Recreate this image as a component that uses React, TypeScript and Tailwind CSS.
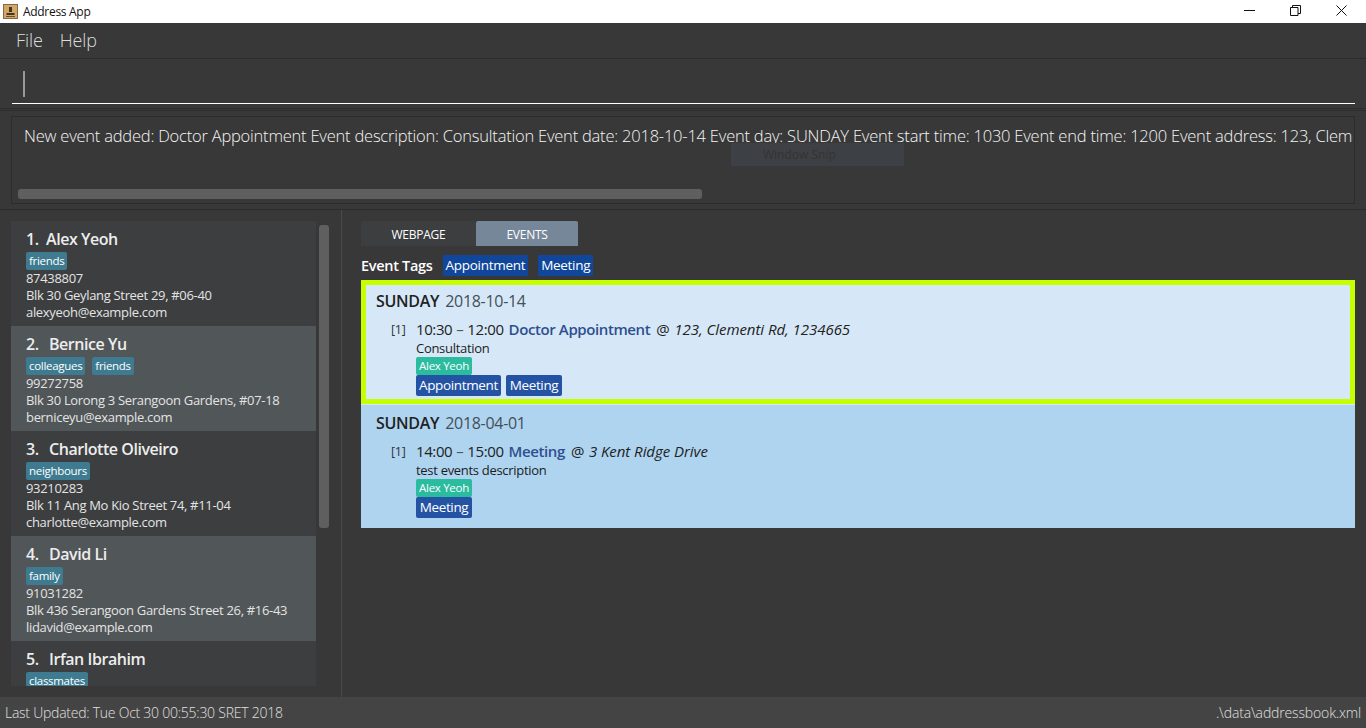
const font = { fontFamily: '"Open Sans", "Noto Sans", sans-serif' };

type Person = {
  id: number;
  name: string;
  tags: string[];
  phone?: string;
  address?: string;
  email?: string;
};

const people: Person[] = [
  { id: 1, name: "Alex Yeoh", tags: ["friends"], phone: "87438807", address: "Blk 30 Geylang Street 29, #06-40", email: "alexyeoh@example.com" },
  { id: 2, name: "Bernice Yu", tags: ["colleagues", "friends"], phone: "99272758", address: "Blk 30 Lorong 3 Serangoon Gardens, #07-18", email: "berniceyu@example.com" },
  { id: 3, name: "Charlotte Oliveiro", tags: ["neighbours"], phone: "93210283", address: "Blk 11 Ang Mo Kio Street 74, #11-04", email: "charlotte@example.com" },
  { id: 4, name: "David Li", tags: ["family"], phone: "91031282", address: "Blk 436 Serangoon Gardens Street 26, #16-43", email: "lidavid@example.com" },
  // the list is cut off here, only the tag row of this one shows
  { id: 5, name: "Irfan Ibrahim", tags: ["classmates"] },
];

const PersonCard = ({ person }: { person: Person }) => (
  <div className={`h-[105px] shrink-0 pl-[15px] pt-[7px] ${person.id % 2 === 0 ? "bg-[#515658]" : "bg-[#3c3e3f]"}`}>
    <div className="flex h-[22px] items-center text-[16px] leading-[22px] font-semibold tracking-[-0.45px] text-[#ededed]">
      <span className={person.id === 1 ? "w-[20px]" : "w-[23px]"}>{person.id}.</span>
      <span>{person.name}</span>
    </div>
    <div className="mt-[2px] flex h-[18px] gap-[7px]">
      {person.tags.map((t) => (
        <span key={t} className="h-[18px] rounded-[2px] bg-[#3e7b91] px-[3px] text-[11.5px] leading-[18px] tracking-[-0.3px] text-white">
          {t}
        </span>
      ))}
    </div>
    <div className="text-[13px] leading-[17px] tracking-[-0.32px] text-[#e4e4e4]">
      {person.phone && <div>{person.phone}</div>}
      {person.address && <div>{person.address}</div>}
      {person.email && <div>{person.email}</div>}
    </div>
  </div>
);

type Ev = {
  day: string;
  date: string;
  time: string;
  end: string;
  title: string;
  place: string;
  desc: string;
  tags: string[];
  selected?: boolean;
};

const events: Ev[] = [
  { day: "SUNDAY", date: "2018-10-14", time: "10:30", end: "12:00", title: "Doctor Appointment", place: "123, Clementi Rd, 1234665", desc: "Consultation", tags: ["Appointment", "Meeting"], selected: true },
  { day: "SUNDAY", date: "2018-04-01", time: "14:00", end: "15:00", title: "Meeting", place: "3 Kent Ridge Drive", desc: "test events description", tags: ["Meeting"] },
];

const EventCard = ({ ev }: { ev: Ev }) => (
  <div className={ev.selected ? "h-[124px] border-[5px] border-[#c6ff00] bg-[#d6e8f7] pl-[10px] pt-[4px]" : "h-[124px] border-t border-[#d6e8f7] bg-[#aed4f0] pl-[15px] pt-[6px]"}>
    <div className="flex h-[24px] items-center gap-[6px] text-[16px] tracking-[-0.3px]">
      <span className="font-semibold text-[#222]">{ev.day}</span>
      <span className="text-[#444f59]">{ev.date}</span>
    </div>
    <div className="mt-[5px] flex">
      <span className="ml-[15px] w-[25px] text-[12.5px] leading-[23px] tracking-[-0.3px] text-[#333]">[1]</span>
      <div>
        <div className="flex h-[22px] items-center text-[15px] tracking-[-0.4px] text-[#222]">
          <span>{ev.time}</span>
          <span className="mx-[4px] text-[#555]">–</span>
          <span>{ev.end}</span>
          <span className="ml-[5px] font-semibold text-[#2f4f8f]">{ev.title}</span>
          <span className="ml-[6px]">@</span>
          <span className="ml-[5px] italic tracking-[-0.05px]">{ev.place}</span>
        </div>
        <div className="h-[17px] text-[13px] leading-[16px] tracking-[-0.3px] text-[#1c1c1c]">{ev.desc}</div>
        <div className="h-[18px] w-[56px] rounded-[2px] bg-[#2bbb9f] text-center text-[11.5px] leading-[18px] tracking-[-0.3px] text-white">
          Alex Yeoh
        </div>
        <div className="flex gap-[5px]">
          {ev.tags.map((t) => (
            <span key={t} className="h-[21px] min-w-[56px] rounded-[2px] bg-[#2553a4] px-[3px] text-center text-[13.5px] leading-[21px] tracking-[-0.35px] text-white">
              {t}
            </span>
          ))}
        </div>
      </div>
    </div>
  </div>
);

export default function App() {
  return (
    <div style={font} className="relative flex h-[728px] w-[1366px] flex-col overflow-hidden bg-[#383838]">
      {/* window title */}
      <div className="flex h-[23px] shrink-0 items-center bg-white pl-[3px]">
        <svg width="15" height="15" viewBox="0 0 15 15">
          <rect width="15" height="15" fill="#8a6a3a" />
          <rect x="1" y="1" width="13" height="13" fill="#d0a868" />
          <path d="M6 3h3v5h-3z M3.5 9h8v2h-8z" fill="#4a3420" />
          <rect x="3" y="12" width="9" height="1" fill="#6b4e2c" />
        </svg>
        <span className="ml-[5px] text-[12px] tracking-[-0.3px] text-[#111]">Address App</span>
        <div className="ml-auto mb-[2px] flex items-center">
          <svg width="11" height="11" viewBox="0 0 11 11" className="mr-[35px]"><path d="M0 5.5h11" stroke="#111" /></svg>
          <svg width="11" height="11" viewBox="0 0 11 11" className="mr-[35px]"><path d="M.5 2.5h7.5v8h-7.5z M2.5 2.5v-2h8v8h-2.5" fill="none" stroke="#111" /></svg>
          <svg width="11" height="11" viewBox="0 0 11 11" className="mr-[19px]"><path d="M.5.5l10 10 M10.5.5l-10 10" stroke="#111" /></svg>
        </div>
      </div>

      {/* menu */}
      <div className="flex h-[35px] shrink-0 items-center gap-[17px] pl-[16px] text-[18px] font-light tracking-[-0.1px] text-[#dcdcdc]">
        <span>File</span>
        <span>Help</span>
      </div>

      {/* command box */}
      <div className="h-[51px] shrink-0 border-t border-b border-[#2c2c2c] pl-[12px] pr-[11px] pt-[11px]">
        <div className="h-[34px] border-b border-white pl-[11px] pt-[1px]">
          <div className="h-[26px] w-[2px] bg-[#9a9a9a]" />
        </div>
      </div>

      {/* result display */}
      <div className="mt-[1px] h-[100px] shrink-0 border-t border-b border-[#2c2c2c] px-[11px] py-[5px]">
        <div className="h-[88px] border border-[#2c2c2c] pl-[12px] pr-[1px] pt-[8px]">
          <div className="overflow-hidden whitespace-nowrap text-[16.5px] leading-[22px] font-light tracking-[-0.22px] text-[#f5f5f5]">
            New event added: Doctor Appointment Event description: Consultation Event date: 2018-10-14 Event day: SUNDAY Event start time: 1030 Event end time: 1200 Event address: 123, Clementi Rd, 1234665
          </div>
          <div className="-ml-[6px] mt-[42px] h-[10px] w-[684px] rounded-[3px] bg-[#5f5f5f]" />
        </div>
      </div>

      {/* stray snip overlay from the capture */}
      <div className="absolute left-[731px] top-[143px] flex h-[23px] w-[173px] items-center bg-[#3d4145] pl-[32px] text-[12px] text-[#333]">
        Window Snip
      </div>

      {/* main */}
      <div className="flex min-h-0 flex-1">
        <div className="flex w-[342px] shrink-0 border-r border-[#4a4a4a] pt-[11px] pb-[11px] pl-[11px]">
          <div className="flex w-[305px] flex-col overflow-hidden">
            {people.map((p) => (
              <PersonCard key={p.id} person={p} />
            ))}
          </div>
          <div className="ml-[3px] mt-[4px] h-[303px] w-[10px] rounded-[3px] bg-[#5f5f5f]" />
        </div>
        <div className="flex-1 pl-[19px] pr-[11px] pt-[11px]">
          <div className="flex h-[25px] text-[12px] font-medium tracking-[-0.25px] text-white">
            <div className="flex w-[115px] items-center justify-center rounded-t-[2px] bg-[#3c3e3f] pt-[2px]">WEBPAGE</div>
            <div className="flex w-[102px] items-center justify-center rounded-t-[2px] bg-[#76879a] pt-[2px]">EVENTS</div>
          </div>
          <div className="mt-[9px] flex h-[21px] items-center">
            <span className="text-[14.5px] font-semibold tracking-[-0.3px] text-white">Event Tags</span>
            <span className="ml-[10px] h-[21px] bg-[#10479a] px-[3px] text-[13.5px] leading-[21px] tracking-[-0.3px] text-white">Appointment</span>
            <span className="ml-[10px] h-[21px] bg-[#10479a] px-[3px] text-[13.5px] leading-[21px] tracking-[-0.3px] text-white">Meeting</span>
          </div>
          <div className="mt-[4px]">
            {events.map((e) => (
              <EventCard key={e.date} ev={e} />
            ))}
          </div>
        </div>
      </div>

      {/* status bar */}
      <div className="flex h-[31px] shrink-0 items-center justify-between bg-[#444444] px-[5px] text-[14px] font-light tracking-[-0.25px] text-[#e0e0e0]">
        <span>Last Updated: Tue Oct 30 00:55:30 SRET 2018</span>
        <span className="tracking-[-0.15px]">.\data\addressbook.xml</span>
      </div>
    </div>
  );
}
